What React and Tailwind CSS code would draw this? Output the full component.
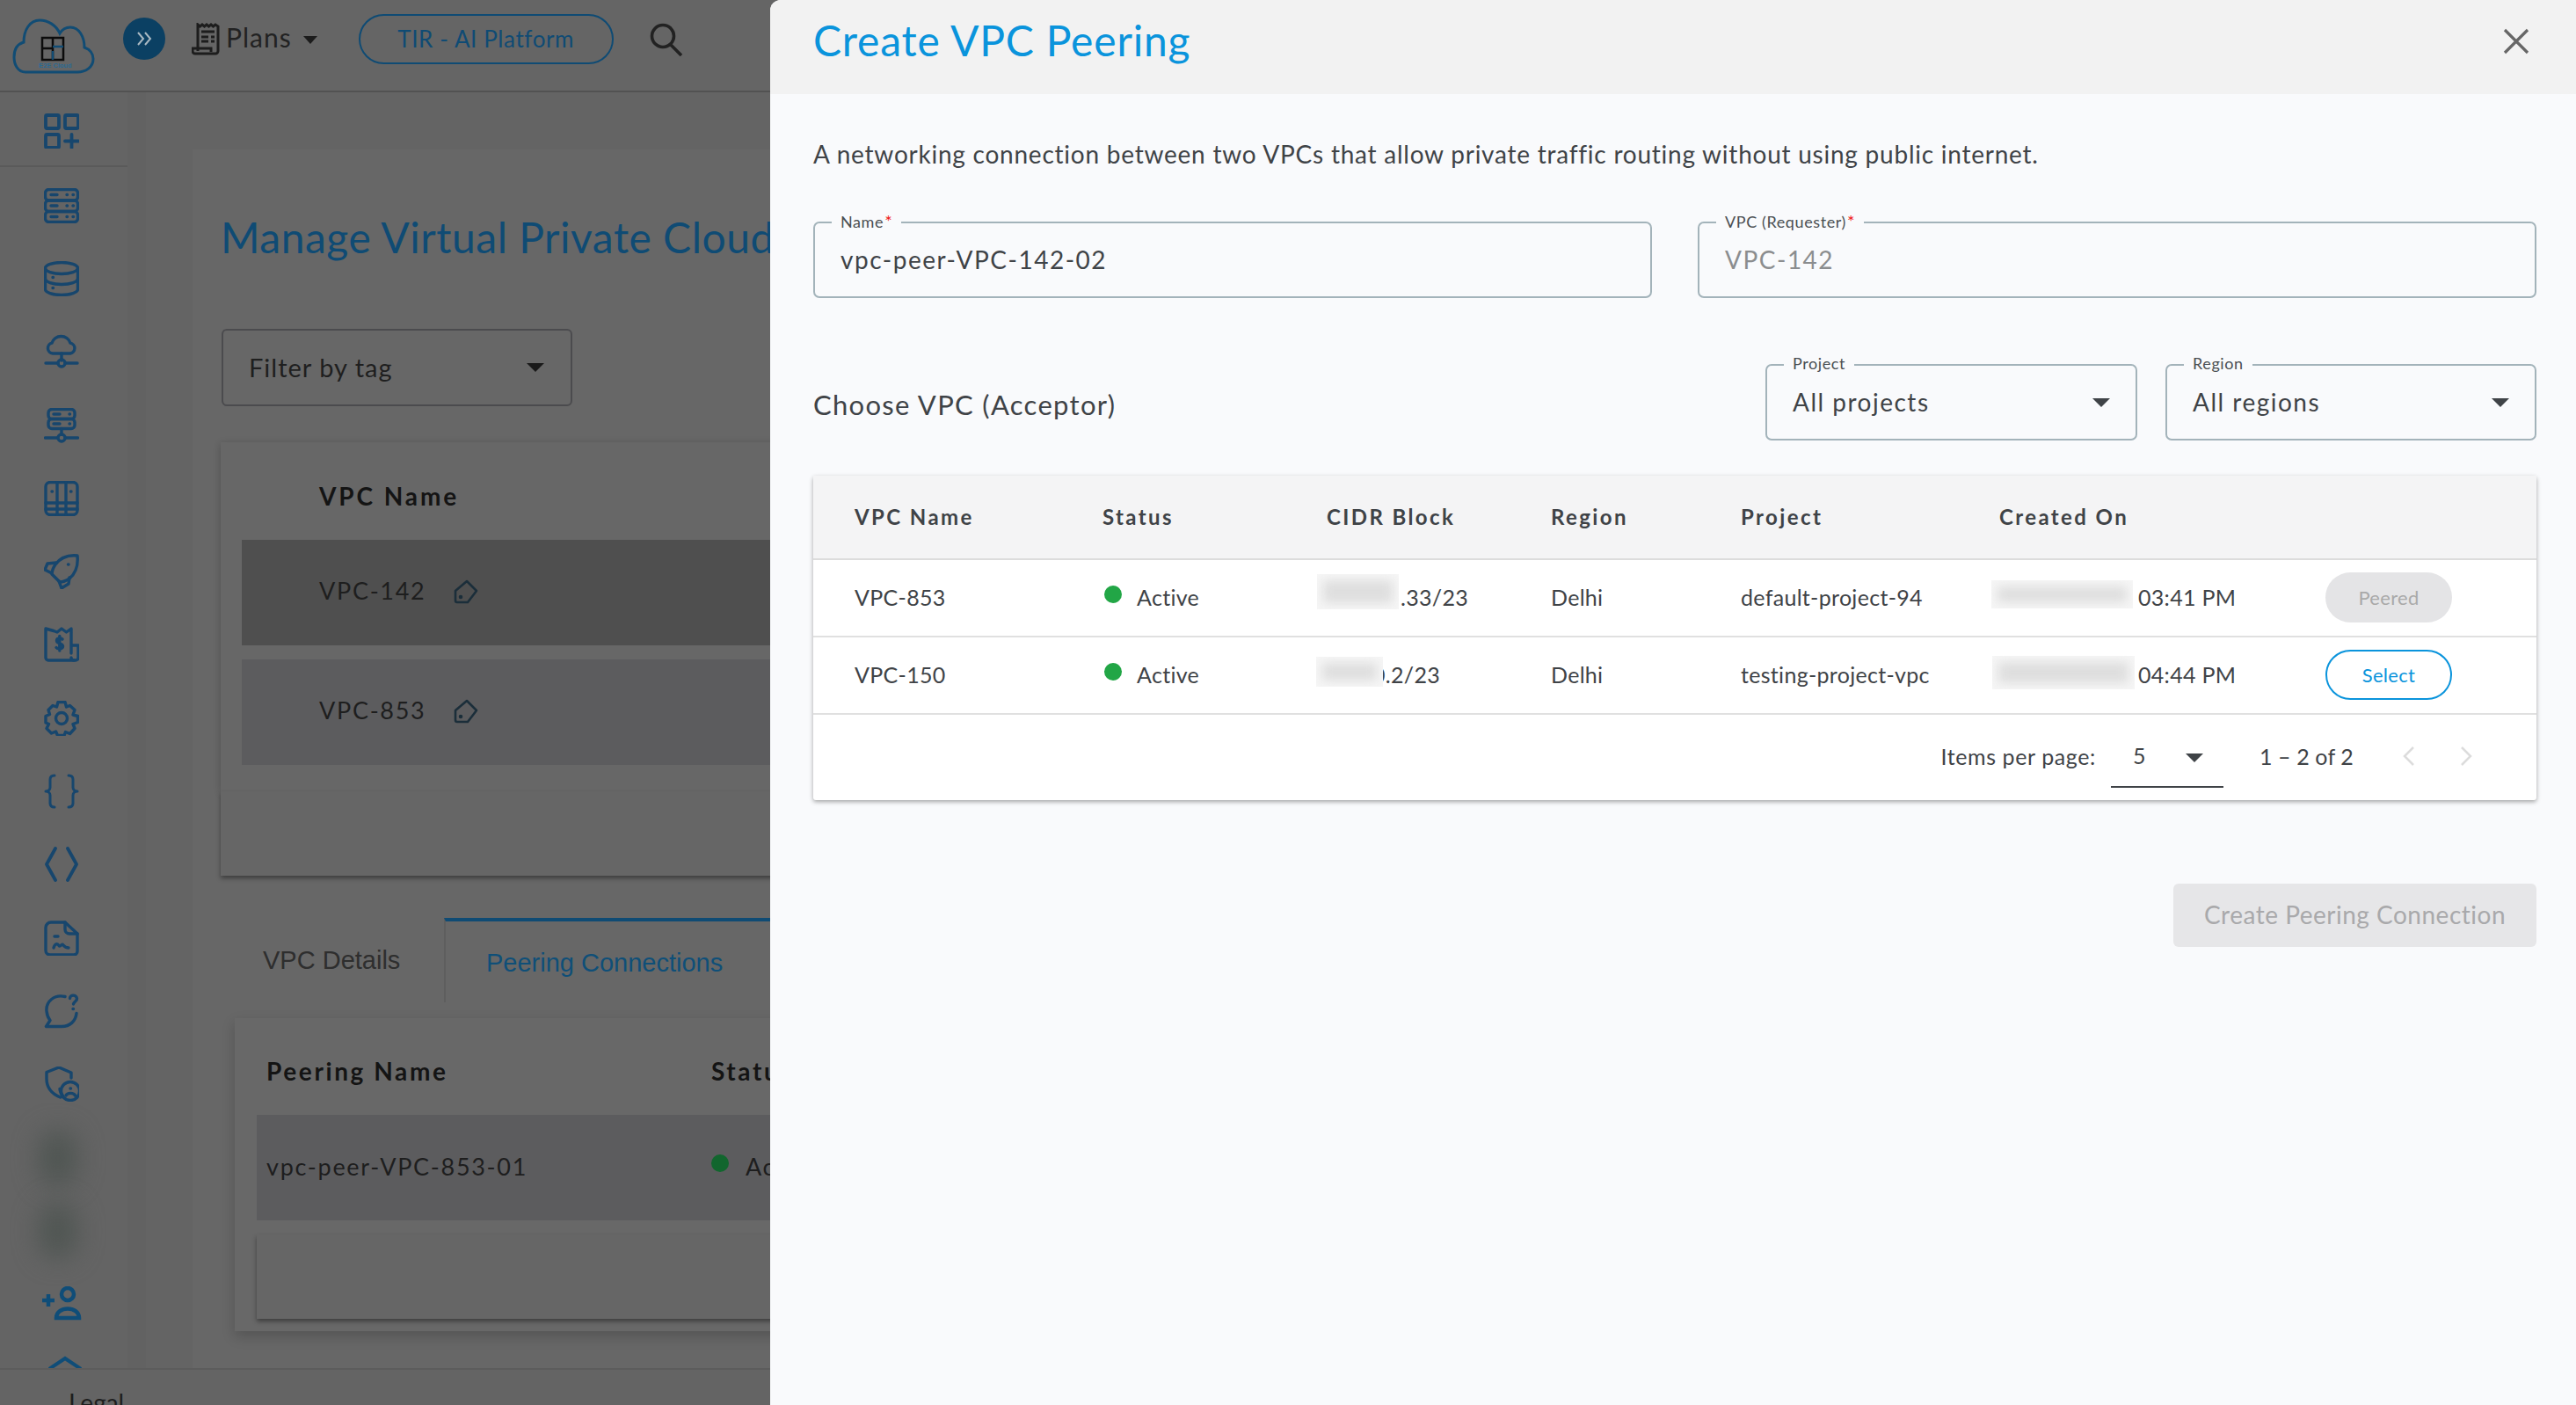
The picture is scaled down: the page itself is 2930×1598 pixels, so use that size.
import React from 'react';

const base = "font-['Lato','Noto_Sans',sans-serif]";

function Ico({ children, size = 40, w = 3.4, className = '' }) {
  return (
    <svg
      width={size}
      height={size}
      viewBox="0 0 40 40"
      fill="none"
      stroke="currentColor"
      strokeWidth={w}
      strokeLinecap="round"
      strokeLinejoin="round"
      className={className}
    >
      {children}
    </svg>
  );
}

const sideIcons = [
  // servers
  <Ico key="servers">
    <rect x="1.5" y="1.5" width="37" height="12.5" rx="4" />
    <rect x="1.5" y="14" width="37" height="12.5" rx="4" />
    <rect x="1.5" y="26.5" width="37" height="12" rx="4" />
    <path d="M8 7.5h7M8 20h7M8 32.5h7M26 7.5h.5M33 7.5h.5M26 20h.5M33 20h.5M26 32.5h.5M33 32.5h.5" />
  </Ico>,
  // database
  <Ico key="db">
    <ellipse cx="20" cy="8" rx="18.5" ry="6.5" />
    <path d="M1.5 8v24c0 3.6 8.3 6.5 18.5 6.5s18.5-2.9 18.5-6.5V8" />
    <path d="M1.5 20c0 3.6 8.3 6.5 18.5 6.5s18.5-2.9 18.5-6.5" />
    <path d="M10 18.5h.5M10 30.5h.5" />
  </Ico>,
  // cloud network
  <Ico key="cloud">
    <path d="M10 22a6 6 0 0 1-1-11.800A11 11 0 0 1 30 10.200 6 6 0 0 1 30 22H10z" />
    <path d="M20 22v8M2 33h14M24 33h14" />
    <circle cx="20" cy="33" r="4" />
  </Ico>,
  // server network
  <Ico key="srvnet">
    <rect x="5" y="1.500" width="30" height="11" rx="4" />
    <rect x="5" y="12.500" width="30" height="11" rx="4" />
    <path d="M11 7h7M11 18h7M29 7h.5M29 18h.5M20 23.500V30M1.500 34h14M24.500 34h14" />
    <circle cx="20" cy="34" r="4" />
  </Ico>,
  // block grid
  <Ico key="grid">
    <rect x="2" y="1.500" width="36" height="37" rx="5" />
    <path d="M15 1.500v37M25 1.500v37M2 25h36M2 32h36" />
    <path d="M9 12h.5M30.500 12h.5" />
  </Ico>,
  // rocket
  <Ico key="rocket">
    <path d="M38 2c-10-1-19 2-25 10-2 3-4 7-4 11l9 9c4 0 8-2 11-4C36 22 39 12 38 2z" />
    <path d="M14 10L4 11l-3 7 8 4M29 27l-1 7-8 5-3-8" />
    <path d="M27.500 12h.5" />
  </Ico>,
  // bill
  <Ico key="bill">
    <path d="M31 30V2l-5.500 4-5.500-4-5 4-4-1.500L2 2v33a3 3 0 0 0 3 3h31a3 3 0 0 0 3-3V21h-8" />
    <path d="M31 35a3 3 0 0 0 3 3" />
    <path d="M21 14c-1-1.500-6.500-1.800-6.500 1.700 0 3.600 7 2.500 7 6.300 0 3.500-6 3.400-7.500 1.500M17.800 10.500v16.500" />
  </Ico>,
  // gear
  <Ico key="gear">
    <path d="M16 1.500h8l1.500 5.500 4-1.500 5.500 5-2 5.500 5.500 1.500v7l-5.500 2 2 5-5.500 6-5-2-1.500 4h-7.500l-2-4.500-5 2-5.500-5.500 2.500-5L2 25v-7.500l4.500-2L5 10.500 10 5.500l4.500 1.500z" />
    <circle cx="20" cy="20" r="6.500" />
  </Ico>,
  // braces
  <Ico key="braces" w={3}>
    <path d="M12 2c-3 0-5 1.500-5 4.500v9c0 2.500-2 4.500-5 4.500 3 0 5 2 5 4.500v9c0 3 2 4.500 5 4.500" />
    <path d="M28 2c3 0 5 1.500 5 4.500v9c0 2.500 2 4.500 5 4.500-3 0-5 2-5 4.500v9c0 3-2 4.500-5 4.500" />
  </Ico>,
  // code
  <Ico key="code" w={3.800}>
    <path d="M13 2L3 20l10 18M27 2l10 18-10 18" />
  </Ico>,
  // document
  <Ico key="doc">
    <path d="M24 2H8a6 6 0 0 0-6 6v26a5 5 0 0 0 5 5h27a4 4 0 0 0 4-4V15L24 2z" />
    <path d="M24 2v8a5 5 0 0 0 5 5h9" />
    <path d="M12 18h4M11 31c1.500-5 4.500-5 6-2.500 1.500 2 3-3 5-.500 1.500 2 3 3 6 3" />
  </Ico>,
  // help chat
  <Ico key="chat">
    <path d="M24 3.500C12 .5 2 9 3 20c.5 5 2 8 4 10.500L2.500 37.500H20c9.500 0 16-6 17-15" />
    <path d="M29.500 5.500c0-4.500 7-4.500 8 0 .5 3-3.500 3.500-4 6.500M33 17.500h.5" />
  </Ico>,
  // shield user
  <Ico key="shield">
    <path d="M18 25.500c.5 4 2 6.500 3.500 8-1 .8-2 1.300-3 1.500C9 31 3 25 3 14V6.500L17 1l14 6v6" />
    <circle cx="30" cy="28" r="10.500" />
    <path d="M30 25h.5M25 33c1.500-3.500 9-3.500 10.500 0" />
  </Ico>,
];

function BlurSpot() {
  return (
    <div className="w-[44px] h-[64px] rounded-full bg-[#505653] blur-[14px] -ml-[8px]"></div>
  );
}

function Sidebar() {
  return (
    <aside className="w-[145px] shrink-0 overflow-hidden text-[#17466d]">
      <div className="h-[85px] flex items-center justify-center border-b-2 border-[#5a5a5a]">
        <div className="-ml-[5px] mt-[5px]">
          <Ico w={3.800}>
            <rect x="2" y="2" width="15" height="15" rx="1.500" />
            <rect x="24" y="2" width="15" height="15" rx="1.500" />
            <rect x="2" y="24" width="15" height="15" rx="1.500" />
            <path d="M31.500 24v15M24 31.500h15" />
          </Ico>
        </div>
      </div>
      <div className="pt-[2px] pr-[5px]">
        {sideIcons.map((icon) => (
          <div key={icon.key} className="h-[83.3px] flex items-center justify-center">
            {icon}
          </div>
        ))}
        <div className="h-[83.3px] flex items-center justify-center">
          <BlurSpot />
        </div>
        <div className="h-[83.3px] flex items-center justify-center">
          <BlurSpot />
        </div>
        <div className="h-[83.3px] flex items-center justify-center text-[#0f4d78]">
          <svg width="46" height="40" viewBox="0 0 46 40" fill="none" stroke="currentColor" strokeWidth="4.500">
            <path d="M1 16h14M8 9v14" />
            <circle cx="30" cy="9" r="7" />
            <path d="M17 36c0-14 26-14 26 0z" />
          </svg>
        </div>
        <div className="h-[83.3px] flex justify-center text-[#0f4d78] pt-[17px] pl-[8px]">
          <svg width="38" height="30" viewBox="0 0 38 30" fill="none" stroke="currentColor" strokeWidth="4">
            <path d="M1 15L19 3l18 12" />
          </svg>
        </div>
      </div>
    </aside>
  );
}

function Logo() {
  return (
    <svg width="94" height="64" viewBox="0 0 94 64" fill="none" className="shrink-0">
      <path
        d="M15 62C6 62 2 53 2 45C2 36 6 30 13 28C13 14 20 3 31 3C41 3 50 9 54 18C57 13 62 11 66 11C76 11 82 22 82 34C88 36 92 41 92 47C92 56 84 62 74 62Z"
        stroke="#114c74"
        strokeWidth="3"
      />
      <path d="M34 23h24v25H34zM46 23v25M34 35h12" stroke="#0c0c0c" strokeWidth="2.500" />
      <path d="M46 33h12M46 38v10" stroke="#114c74" strokeWidth="2.500" />
      <text x="30" y="57" fontSize="7.500" fontWeight="700" fill="#2a6a92" fontFamily="Liberation Sans, sans-serif">
        E2E Cloud
      </text>
    </svg>
  );
}

function Topbar() {
  return (
    <header className="h-[105px] shrink-0 flex items-center border-b-2 border-[#525252] bg-[#656565] pl-[14px]">
      <Logo />
      <div className="ml-[32px] -mt-[15px] w-[48px] h-[48px] rounded-full bg-[#0b4063] flex items-center justify-center text-[#a9b8c2]">
        <svg width="20" height="20" viewBox="0 0 20 20" fill="none" stroke="currentColor" strokeWidth="2">
          <path d="M3 3l6 7-6 7M11 3l6 7-6 7" />
        </svg>
      </div>
      <svg width="34" height="37" viewBox="0 0 34 37" fill="none" stroke="#1d1d1d" strokeWidth="3" className="ml-[30px] -mt-[14px]">
        <path d="M7 32V2l2.500 2L12 2l2.500 2L17 2l2.500 2L22 2l2.500 2L27 2l3 2v28a3 3 0 0 1-3 3H4a3 3 0 0 1-3-3v-3h21v4" />
        <path d="M11 10h15M11 16h8M22 16h4M11 21h8M22 21h4" />
      </svg>
      <span className={`${base} ml-[5px] -mt-[18px] text-[30px] text-[#222] tracking-[1px]`}>Plans</span>
      <span className="ml-[13px] -mt-[12px] w-0 h-0 border-x-[8px] border-x-transparent border-t-[9px] border-t-[#1c1c1c]"></span>
      <div className={`${base} ml-[47px] -mt-[15px] w-[290px] h-[57px] border-2 border-[#0f4b74] rounded-full flex items-center justify-center text-[26px] text-[#0f4b74] tracking-[0.6px]`}>
        TIR - AI Platform
      </div>
      <svg width="38" height="38" viewBox="0 0 38 38" fill="none" stroke="#222" strokeWidth="3.600" className="ml-[41px] -mt-[14px]">
        <circle cx="15" cy="15" r="12.500" />
        <path d="M23 24l13 13" />
      </svg>
    </header>
  );
}

function TagIcon() {
  return (
    <svg width="28" height="28" viewBox="0 0 28 28" fill="none" stroke="#1b2e3a" strokeWidth="2.600" strokeLinejoin="round" className="ml-[32px]">
      <path d="M15 2l11 11-10 13H4a2 2 0 0 1-2-2V13z" />
      <circle cx="8" cy="20" r="1" fill="#1b2e3a" />
    </svg>
  );
}

function Background() {
  return (
    <div className="flex-1 min-h-0 flex bg-[#646464]">
      <Sidebar />
      <div className="w-[21px] shrink-0 bg-[#626262]"></div>
      <div className="flex-1 min-w-0 pl-[53px] pt-[65px] overflow-hidden">
        <div className={`${base} h-[1400px] w-[1200px] bg-[#676767] pl-[33px] pt-[70px]`}>
          <h1 className="-ml-[1px] text-[48px] leading-[60px] text-[#0f4b74] whitespace-nowrap tracking-[0.5px]">Manage Virtual Private Cloud</h1>
          <div className="mt-[74px] w-[399px] h-[88px] border-2 border-[#4b4b4e] rounded-[6px] flex items-center justify-between pl-[29px] pr-[30px]">
            <span className="text-[29px] text-[#1f1f1f] tracking-[1px]">Filter by tag</span>
            <span className="w-0 h-0 border-x-[10px] border-x-transparent border-t-[10px] border-t-[#1a1a1a]"></span>
          </div>
          <div className="mt-[41px] w-[960px] h-[397px] bg-[#676767] shadow-[0_2px_8px_rgba(0,0,0,0.22)] pl-[24px] -ml-[1px]">
            <div className="h-[111px] flex items-center pl-[88px] pt-[11px] text-[28px] font-bold text-[#141414] tracking-[2.900px]">VPC Name</div>
            <div className="h-[120px] bg-[#4f4f4f] flex items-center pl-[88px] pb-[3px] text-[27px] text-[#1e1e1e] tracking-[1.700px]">
              VPC-142
              <TagIcon />
            </div>
            <div className="mt-[16px] h-[120px] bg-[#5c5c5e] flex items-center pl-[88px] pb-[3px] text-[27px] text-[#1e1e1e] tracking-[1.700px]">
              VPC-853
              <TagIcon />
            </div>
          </div>
          <div className="w-[960px] h-[96px] -ml-[1px] bg-[#666] shadow-[0_3px_5px_rgba(0,0,0,0.4)]"></div>

          <div className="mt-[48px] flex h-[96px] font-['Liberation_Sans',sans-serif] text-[29px]">
            <div className="w-[253px] pl-[47px] pt-[27px] text-[#2e2e2e]">VPC Details</div>
            <div className="w-[400px] border-t-4 border-t-[#0f4b74] border-l-2 border-l-[#5e5e5e] pl-[46px] pt-[26px] text-[#0f4f78] whitespace-nowrap">Peering Connections</div>
          </div>

          <div className="mt-[18px] ml-[15px] w-[900px] h-[356px] bg-[#686868] shadow-[0_6px_14px_rgba(0,0,0,0.18)] pl-[25px]">
            <div className="h-[110px] flex items-center pl-[11px] pt-[10px] text-[28px] font-bold text-[#141414] tracking-[2.600px]">
              <span className="w-[506px]">Peering Name</span>
              <span>Status</span>
            </div>
            <div className="h-[120px] bg-[#5c5c5e] flex items-center pl-[11px] pb-[2px] text-[27px] text-[#1e1e1e] tracking-[1.700px]">
              <span className="w-[506px]">vpc-peer-VPC-853-01</span>
              <span className="w-[20px] h-[20px] rounded-full bg-[#12662e] -mt-[8px]"></span>
              <span className="ml-[19px]">Active</span>
            </div>
            <div className="mt-[16px] h-[96px] bg-[#666] shadow-[0_3px_5px_rgba(0,0,0,0.4)]"></div>
          </div>
        </div>
      </div>
    </div>
  );
}

function Field({ label, required, value, muted, arrow }) {
  return (
    <div className="relative h-[87px] border-2 border-[#a3b3ba] rounded-[7px] flex items-center justify-between pl-[29px] pr-[29px]">
      <span className="absolute -top-[13px] left-[19px] px-[10px] bg-[#f9fafc] text-[18px] leading-[20px] text-[#4a4e52] tracking-[0.6px]">
        {label}
        {required && <span className="text-[20px] text-[#f01818] ml-[1px]">*</span>}
      </span>
      <span className={`text-[28px] tracking-[1.500px] -mt-[2px] ${muted ? 'text-[#8b8d8f]' : 'text-[#3f4347]'}`}>{value}</span>
      {arrow && <span className="w-0 h-0 border-x-[10px] border-x-transparent border-t-[10px] border-t-[#3f4347]"></span>}
    </div>
  );
}

const rowGrid = 'grid grid-cols-[282px_255px_255px_216px_294px_372px_1fr] items-center pl-[47px]';

function Blob({ className }) {
  return (
    <span className={`absolute bg-[#f6f6f6] overflow-hidden ${className}`}>
      <span className="absolute inset-[7px] bg-[#dedede] blur-[6px]"></span>
    </span>
  );
}

function VpcRow({ name, cidr, cidrClass, blob, project, time, timeBlob, action }) {
  return (
    <div className={`${rowGrid} h-[88px] border-b-2 border-[#e0e0e0] text-[25px] text-[#3f4347] tracking-[0.3px]`}>
      <span>{name}</span>
      <span className="flex items-center">
        <span className="w-[20px] h-[20px] rounded-full bg-[#22a646] ml-[2px] -mt-[8px]"></span>
        <span className="ml-[17px]">Active</span>
      </span>
      <span className={`relative ${cidrClass}`}>
        {cidr}
        <Blob className={blob} />
      </span>
      <span>Delhi</span>
      <span className="whitespace-nowrap">{project}</span>
      <span className="relative pl-[158px] whitespace-nowrap">
        {time}
        <Blob className={timeBlob} />
      </span>
      {action}
    </div>
  );
}

function Drawer() {
  return (
    <div className={`${base} absolute top-0 right-0 bottom-0 w-[2054px] bg-[#f9fafc] rounded-tl-[12px] overflow-hidden flex flex-col`}>
      <div className="h-[107px] shrink-0 bg-[#f2f2f2] flex items-center justify-between pl-[49px] pr-[53px]">
        <h2 className="text-[48px] leading-[60px] text-[#0a94dc] -mt-[16px] tracking-[0.8px]">Create VPC Peering</h2>
        <svg width="30" height="30" viewBox="0 0 30 30" stroke="#666" strokeWidth="3.200" className="-mt-[14px]">
          <path d="M2 2l26 26M28 2L2 28" />
        </svg>
      </div>
      <div className="flex-1 pl-[49px] pr-[45px] pt-[50px] flex flex-col">
        <p className="text-[28px] leading-[36px] text-[#3f4347] tracking-[0.76px] whitespace-nowrap">
          A networking connection between two VPCs that allow private traffic routing without using public internet.
        </p>
        <div className="mt-[59px] grid grid-cols-2 gap-x-[52px]">
          <Field label="Name" required value="vpc-peer-VPC-142-02" />
          <Field label="VPC (Requester)" required value="VPC-142" muted />
        </div>
        <div className="mt-[75px] flex items-center">
          <span className="text-[31px] text-[#3f4347] tracking-[1.300px] mt-[6px]">Choose VPC (Acceptor)</span>
          <div className="ml-auto flex gap-x-[32px]">
            <div className="w-[423px]">
              <Field label="Project" value="All projects" arrow />
            </div>
            <div className="w-[422px]">
              <Field label="Region" value="All regions" arrow />
            </div>
          </div>
        </div>
        <div className="mt-[40px] bg-white rounded-[3px] shadow-[0_2px_5px_rgba(0,0,0,0.35)]">
          <div className={`${rowGrid} h-[96px] bg-[#f4f4f5] border-b-2 border-[#dcdcdc] text-[24px] font-bold text-[#3f4347] tracking-[2.400px]`}>
            <span>VPC Name</span>
            <span>Status</span>
            <span>CIDR Block</span>
            <span>Region</span>
            <span>Project</span>
            <span>Created On</span>
          </div>
          <VpcRow
            name="VPC-853"
            cidr=".33/23"
            cidrClass="pl-[84px]"
            blob="-left-[11px] -top-[8px] w-[93px] h-[40px]"
            project="default-project-94"
            time="03:41 PM"
            timeBlob="-left-[9px] -top-[1px] w-[161px] h-[32px]"
            action={
              <span className="-ml-[1px] w-[144px] h-[57px] rounded-full bg-[#e4e4e6] flex items-center justify-center text-[22px] text-[#a9a9a9] -mt-[1px]">Peered</span>
            }
          />
          <VpcRow
            name="VPC-150"
            cidr="0.2/23"
            cidrClass="pl-[52px]"
            blob="-left-[12px] -top-[2px] w-[76px] h-[34px]"
            project="testing-project-vpc"
            time="04:44 PM"
            timeBlob="-left-[8px] -top-[3px] w-[162px] h-[38px]"
            action={
              <span className="-ml-[1px] w-[144px] h-[57px] rounded-full border-2 border-[#0a94dc] flex items-center justify-center text-[22px] text-[#0a94dc] -mt-[1px]">Select</span>
            }
          />
          <div className="h-[97px] flex items-center justify-end pt-[2px] pr-[73px] text-[25px] text-[#3f4347] tracking-[0.6px]">
            <span className="-mt-[3px]">Items per page:</span>
            <div className="ml-[17px] w-[128px] h-[67px] border-b-2 border-[#3f4347] flex items-center justify-between pl-[25px] pr-[23px]">
              <span className="-mt-[3px]">5</span>
              <span className="w-0 h-0 border-x-[10px] border-x-transparent border-t-[10px] border-t-[#3f4347]"></span>
            </div>
            <span className="ml-[41px] -mt-[3px] tracking-[0.13px]">1 – 2 of 2</span>
            <svg width="14" height="24" viewBox="0 0 14 24" fill="none" stroke="#dcdcdc" strokeWidth="2.500" className="ml-[56px] -mt-[6px]">
              <path d="M12 2L2 12l10 10" />
            </svg>
            <svg width="14" height="24" viewBox="0 0 14 24" fill="none" stroke="#dcdcdc" strokeWidth="2.500" className="ml-[51px] -mt-[6px]">
              <path d="M2 2l10 10L2 22" />
            </svg>
          </div>
        </div>
        <button className="mt-[95px] self-end w-[413px] h-[72px] pb-[2px] rounded-[6px] bg-[#e6e6e8] text-[28px] text-[#a9a9ab] tracking-[0.5px]">
          Create Peering Connection
        </button>
      </div>
    </div>
  );
}

export default function App() {
  return (
    <div className={`${base} relative h-[1598px] w-full overflow-hidden flex flex-col`}>
      <Topbar />
      <Background />
      <div className="h-[42px] shrink-0 bg-[#646464] border-t-2 border-[#5c5c5c] pl-[78px] pt-[20px] text-[28px] leading-[34px] text-[#1e1e1e] overflow-hidden">
        Legal
      </div>
      <Drawer />
    </div>
  );
}
